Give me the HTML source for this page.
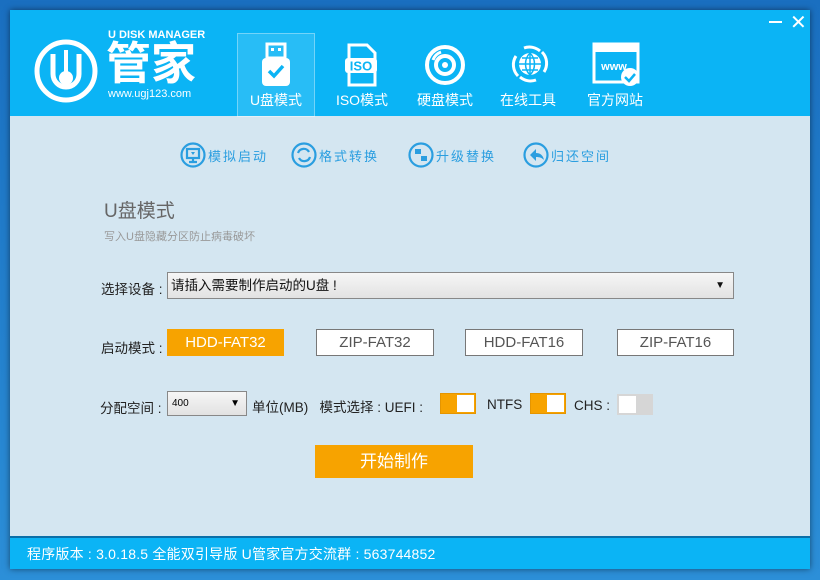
<!DOCTYPE html><html><head><meta charset="utf-8"><style>
*{margin:0;padding:0;box-sizing:border-box}
body{width:820px;height:580px;background:linear-gradient(180deg,#1a6fc0,#2c8fd8);position:relative;overflow:hidden;font-family:"Liberation Sans","Noto Sans CJK SC",sans-serif}
.a{position:absolute;white-space:nowrap}
#win{position:absolute;left:10px;top:10px;width:800px;height:559px;background:#d4e6f1;box-shadow:0 0 6px rgba(0,0,0,.5)}
#hd{position:absolute;left:0;top:0;width:800px;height:106px;background:#0bb4f5}
#ft{position:absolute;left:0;top:526px;width:800px;height:33px;background:#0bb4f5;border-top:2px solid #0a6fa8}
.tab{color:#fff;font-size:14px;text-align:center;width:80px}
.st{color:#2a9ee0;font-size:13px;letter-spacing:2px}
.lb{color:#222;font-size:13.5px}
.btn{position:absolute;height:27px;border:1px solid #777;background:#fff;color:#555;font-size:15px;text-align:center;line-height:25px}
.tg{position:absolute;width:36px;height:21px;background:#f7a300;border:1px solid #e59500}
.tg i{position:absolute;right:1px;top:1px;width:17px;height:17px;background:#fff}
</style></head><body>
<div id="win">
<div id="hd">
<svg class="a" style="left:23px;top:28px" width="66" height="66" viewBox="0 0 66 66"><circle cx="33" cy="33" r="29" fill="none" stroke="#fff" stroke-width="5"/><path d="M20 16v20a13 13 0 0 0 26 0V16" fill="none" stroke="#fff" stroke-width="5"/><circle cx="33" cy="40" r="7" fill="#fff"/><path d="M33 12v30" stroke="#fff" stroke-width="4"/></svg>
<div class="a" style="left:98px;top:19px;color:#fff;font-size:11px;font-weight:bold">U DISK MANAGER</div>
<div class="a" style="left:96px;top:27px;color:#fff;font-size:45px;font-weight:bold;line-height:54px">管家</div>
<div class="a" style="left:98px;top:78px;color:#fff;font-size:11px">www.ugj123.com</div>
<div class="a" style="left:227px;top:23px;width:78px;height:84px;background:rgba(255,255,255,.12);border:1px solid rgba(255,255,255,.35)"></div>
<svg class="a" style="left:248px;top:32px" width="36" height="46" viewBox="0 0 36 46"><rect x="9" y="2" width="18" height="14" fill="none" stroke="#fff" stroke-width="3"/><rect x="13" y="6" width="3" height="3" fill="#fff"/><rect x="20" y="6" width="3" height="3" fill="#fff"/><rect x="4" y="16" width="28" height="28" rx="4" fill="#fff"/><path d="M11 29l5 5 9-10" fill="none" stroke="#0bb4f5" stroke-width="3.5"/></svg>
<svg class="a" style="left:333px;top:32px" width="36" height="46" viewBox="0 0 36 46"><path d="M6 3h18l8 8v32H6z" fill="none" stroke="#fff" stroke-width="3"/><rect x="2" y="16" width="32" height="15" rx="3" fill="#fff"/><text x="18" y="28.5" font-size="13" font-weight="bold" fill="#0bb4f5" text-anchor="middle" font-family="Liberation Sans">ISO</text></svg>
<svg class="a" style="left:414px;top:34px" width="42" height="42" viewBox="0 0 42 42"><circle cx="21" cy="21" r="18" fill="none" stroke="#fff" stroke-width="4"/><circle cx="21" cy="21" r="9" fill="none" stroke="#fff" stroke-width="4"/><circle cx="21" cy="21" r="3" fill="#fff"/><path d="M9 16a13 13 0 0 1 8-8" stroke="#fff" stroke-width="3" fill="none"/></svg>
<svg class="a" style="left:498px;top:32px" width="44" height="44" viewBox="0 0 44 44"><circle cx="22" cy="22" r="11" fill="#fff"/><path d="M11 22h22M22 11v22M14 16h16M14 28h16M22 11c-6 6-6 16 0 22M22 11c6 6 6 16 0 22" stroke="#0bb4f5" stroke-width="1.5" fill="none"/><path d="M8 14a16 16 0 0 0 2 20M36 30a16 16 0 0 0-2-20M16 6a16 16 0 0 1 16 3M28 38a16 16 0 0 1-16-3" stroke="#fff" stroke-width="3" fill="none"/></svg>
<svg class="a" style="left:582px;top:32px" width="50" height="46" viewBox="0 0 50 46"><rect x="2" y="2" width="44" height="38" fill="none" stroke="#fff" stroke-width="3"/><rect x="2" y="2" width="44" height="8" fill="#fff"/><text x="22" y="28" font-size="11" font-weight="bold" fill="#fff" text-anchor="middle" font-family="Liberation Sans">www</text><circle cx="38" cy="35" r="9" fill="#fff"/><path d="M33 35l4 4 6-7" stroke="#0bb4f5" stroke-width="2.5" fill="none"/></svg>
<div class="a tab" style="left:226px;top:80px">U盘模式</div>
<div class="a tab" style="left:312px;top:80px">ISO模式</div>
<div class="a tab" style="left:395px;top:80px">硬盘模式</div>
<div class="a tab" style="left:478px;top:80px">在线工具</div>
<div class="a tab" style="left:565px;top:80px">官方网站</div>
<div class="a" style="left:759px;top:11px;width:13px;height:2px;background:#fff"></div>
<div class="a" style="left:780px;top:0px;color:#fff;font-size:20px">✕</div>
</div>
<svg class="a" style="left:170px;top:131px" width="440" height="28" viewBox="0 0 440 28"><g fill="none" stroke="#2a9ee0" stroke-width="2.2"><circle cx="13" cy="14" r="11.5"/><circle cx="124" cy="14" r="11.5"/><circle cx="241" cy="14" r="11.5"/><circle cx="356" cy="14" r="11.5"/><rect x="7" y="8" width="12" height="9"/><path d="M13 17v4M9 21h8M118 12a6 6 0 0 1 11-1M130 16a6 6 0 0 1-11 1"/></g><g fill="#2a9ee0"><path d="M11 11h4l-2 3z"/><rect x="235" y="8" width="6" height="5"/><rect x="241" y="15" width="6" height="5"/><path d="M350 14l6-6v4c4 0 7 2 8 7-2-2-4-3-8-3v4z"/></g></svg>
<div class="a st" style="left:198px;top:136px">模拟启动</div>
<div class="a st" style="left:309px;top:136px">格式转换</div>
<div class="a st" style="left:426px;top:136px">升级替换</div>
<div class="a st" style="left:541px;top:136px">归还空间</div>
<div class="a" style="left:94px;top:186px;color:#666;font-size:19px">U盘模式</div>
<div class="a" style="left:94px;top:218px;color:#999;font-size:11px">写入U盘隐藏分区防止病毒破坏</div>
<div class="a lb" style="left:91px;top:268px">选择设备 :</div>
<div class="a" style="left:157px;top:262px;width:567px;height:27px;border:1px solid #888;background:linear-gradient(#f6f6f6,#e2e2e2);font-size:13.5px;line-height:25px;padding-left:3px;color:#111">请插入需要制作启动的U盘 !<span style="position:absolute;right:8px;top:0;font-size:10px">▼</span></div>
<div class="a lb" style="left:91px;top:327px">启动模式 :</div>
<div class="btn" style="left:157px;top:319px;width:117px;background:#f7a300;border-color:#f7a300;color:#fff">HDD-FAT32</div>
<div class="btn" style="left:306px;top:319px;width:118px">ZIP-FAT32</div>
<div class="btn" style="left:455px;top:319px;width:118px">HDD-FAT16</div>
<div class="btn" style="left:607px;top:319px;width:117px">ZIP-FAT16</div>
<div class="a lb" style="left:90px;top:387px">分配空间 :</div>
<div class="a" style="left:157px;top:381px;width:80px;height:25px;border:1px solid #888;background:linear-gradient(#f6f6f6,#e2e2e2);font-size:10px;line-height:23px;padding-left:4px">400<span style="position:absolute;right:6px;top:0;font-size:10px">▼</span></div>
<div class="a lb" style="left:242px;top:386px">单位(MB)&nbsp;&nbsp; 模式选择 : UEFI :</div>
<div class="tg" style="left:430px;top:383px"><i></i></div>
<div class="a lb" style="left:477px;top:387px">NTFS</div>
<div class="tg" style="left:520px;top:383px"><i></i></div>
<div class="a lb" style="left:564px;top:388px">CHS :</div>
<div class="tg" style="left:607px;top:384px;background:#d6d6d6;border-color:#d6d6d6"><i style="left:1px;right:auto"></i></div>
<div class="a" style="left:305px;top:435px;width:158px;height:33px;background:#f7a300;color:#fff;font-size:17px;text-align:center;line-height:33px">开始制作</div>
<div id="ft"><div class="a" style="left:17px;top:6px;color:#fff;font-size:14px;letter-spacing:0.2px">程序版本 : 3.0.18.5 全能双引导版 U管家官方交流群 : 563744852</div></div>
</div>
</body></html>
